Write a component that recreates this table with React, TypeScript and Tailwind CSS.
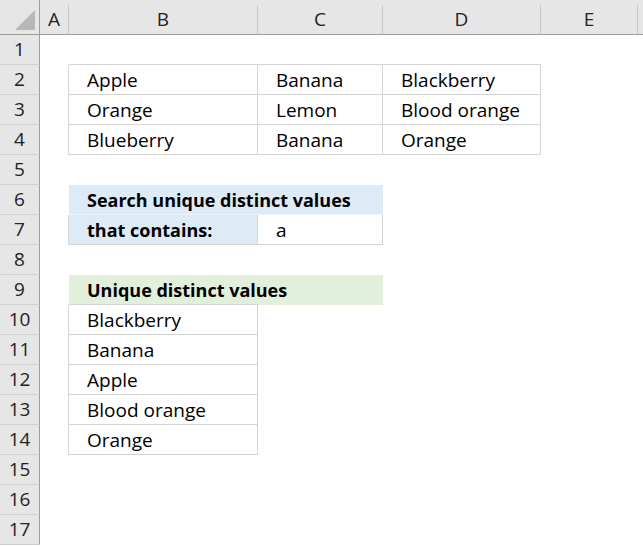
import React from "react";

const COLS = [
  { key: "rh", w: 40 },
  { key: "A", w: 29 },
  { key: "B", w: 189 },
  { key: "C", w: 125 },
  { key: "D", w: 158 },
  { key: "E", w: 97 },
  { key: "", w: 5 },
];

type Cell = { text?: string; bold?: boolean; fill?: string; border?: boolean };

const data: Record<string, Cell> = {
  B2: { text: "Apple", border: true },
  C2: { text: "Banana", border: true },
  D2: { text: "Blackberry", border: true },
  B3: { text: "Orange", border: true },
  C3: { text: "Lemon", border: true },
  D3: { text: "Blood orange", border: true },
  B4: { text: "Blueberry", border: true },
  C4: { text: "Banana", border: true },
  D4: { text: "Orange", border: true },
  B6: { text: "Search unique distinct values", bold: true, fill: "blue" },
  C6: { fill: "blue" },
  B7: { text: "that contains:", bold: true, fill: "blue", border: true },
  C7: { text: "a", border: true },
  B9: { text: "Unique distinct values", bold: true, fill: "green" },
  C9: { fill: "green" },
  B10: { text: "Blackberry", border: true },
  B11: { text: "Banana", border: true },
  B12: { text: "Apple", border: true },
  B13: { text: "Blood orange", border: true },
  B14: { text: "Orange", border: true },
};

const letters = ["A", "B", "C", "D", "E", "F"];
const font = { fontFamily: "'Open Sans', 'Noto Sans', sans-serif" };

function get(r: number, ci: number): Cell | undefined {
  if (ci < 0 || ci >= letters.length) return undefined;
  return data[letters[ci] + r];
}

export default function App() {
  const rows = Array.from({ length: 17 }, (_, i) => i + 1);
  return (
    <div className="w-[643px] h-[546px] overflow-hidden bg-white" style={font}>
      {/* header row */}
      <div className="flex h-[35px] bg-[#e6e6e6] border-b border-[#9e9e9e]">
        <div className="w-[40px] shrink-0 border-r border-[#9e9e9e] relative">
          <div className="absolute right-[4px] bottom-[4px] w-0 h-0 border-l-[20px] border-l-transparent border-b-[20px] border-b-[#b7b7b7]" />
        </div>
        {COLS.slice(1).map((c, i) => (
          <div
            key={i}
            className="shrink-0 flex items-end justify-center pb-[2px]"
            style={{ width: c.w }}
          >
            <div className="flex-1 flex justify-center text-[19px] leading-[26px] text-[#222]">{c.key}</div>
            {i < COLS.length - 2 && <div className="w-px h-[29px] bg-[#c6c6c6] -mb-[2px]" />}
          </div>
        ))}
      </div>
      {rows.map((r) => (
        <div key={r} className="flex h-[30px]">
          <div className="w-[40px] shrink-0 bg-[#e6e6e6] border-r border-[#9e9e9e] border-b border-b-[#d0d0d0] flex items-center justify-center text-[19px] text-[#222]">
            {r}
          </div>
          {COLS.slice(1).map((c, i) => {
            const cell = get(r, i);
            const right = cell?.border || get(r, i + 1)?.border;
            const bottom = cell?.border || get(r + 1, i)?.border;
            const fill =
              cell?.fill === "blue"
                ? "bg-[#ddebf7]"
                : cell?.fill === "green"
                ? "bg-[#e2efda]"
                : "bg-white";
            const rb = right ? "border-r border-r-[#d4d4d4]" : "";
            const bb = bottom
              ? cell?.fill === "blue" && r === 6
                ? "border-b border-b-[#eef4fb]"
                : "border-b border-b-[#d4d4d4]"
              : "";
            return (
              <div
                key={i}
                className={`shrink-0 flex items-center pl-[18px] pt-px whitespace-nowrap text-black ${fill} ${rb} ${bb} ${cell?.bold ? "font-bold text-[18px]" : "text-[19px]"}`}
                style={{ width: c.w }}
              >
                <span className="relative z-10">{cell?.text ?? ""}</span>
              </div>
            );
          })}
        </div>
      ))}
    </div>
  );
}
